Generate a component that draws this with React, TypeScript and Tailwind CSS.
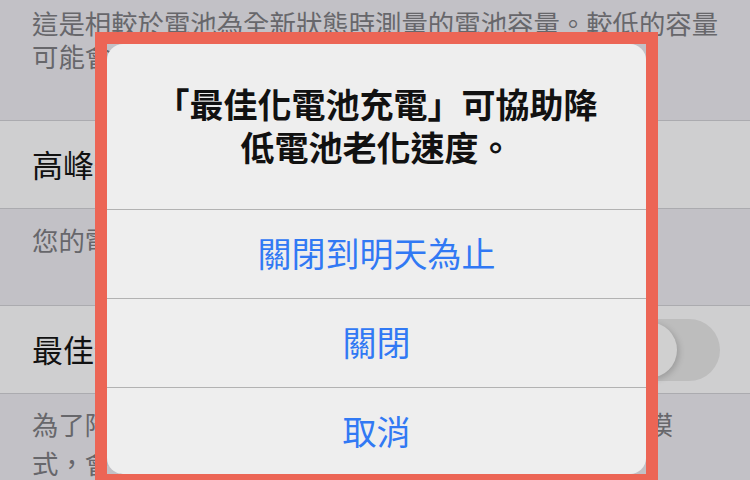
const font = { fontFamily: '"Noto Sans CJK TC", "Noto Sans", sans-serif' };

function Footer({ lines, className }: { lines: string[]; className: string }) {
  return (
    <div className={`px-[32px] text-[26.4px] text-[#67676b] ${className}`}>
      {lines.map((line) => (
        <div key={line} className="whitespace-nowrap">
          {line}
        </div>
      ))}
    </div>
  );
}

function Row({ label, toggle }: { label: string; toggle?: boolean }) {
  return (
    <div className="flex h-[89px] items-center justify-between border-y border-[#ababaf] bg-[#cfcfd0] pl-[32px] pr-[30px]">
      <span className="text-[31px] text-[#111111]">{label}</span>
      {toggle ? (
        <div className="flex h-[62px] w-[102px] items-center rounded-full bg-[#bdbdbd] px-[3px]">
          <div className="h-[56px] w-[56px] rounded-full bg-[#d0d0d0] shadow-[2px_2px_6px_rgba(0,0,0,0.18)]" />
        </div>
      ) : null}
    </div>
  );
}

function Alert() {
  return (
    <div className="absolute left-[95px] top-[32px] h-[454px] w-[563px] border-[12px] border-[#ec6555]">
      <div className="flex h-[430px] flex-col overflow-hidden rounded-[16px] bg-[#eeeeee]">
        <div className="px-[30px] pb-[41px] pt-[38px] text-center text-[34px] font-semibold leading-[43px] text-[#111111]">
          「最佳化電池充電」可協助降
          <br />
          低電池老化速度。
        </div>
        <button
          type="button"
          className="h-[89px] border-t border-[#b2b2b2] pb-[4px] text-[34px] text-[#3179f4]"
        >
          關閉到明天為止
        </button>
        <button
          type="button"
          className="h-[89px] border-t border-[#b2b2b2] pb-[4px] text-[34px] text-[#3179f4]"
        >
          關閉
        </button>
        <button
          type="button"
          className="flex-1 border-t border-[#b2b2b2] pb-[2px] text-[34px] text-[#3179f4]"
        >
          取消
        </button>
      </div>
    </div>
  );
}

export default function App() {
  return (
    <div className="relative h-[480px] w-[750px] overflow-hidden bg-[#c2c1c6]" style={font}>
      <Footer
        className="h-[120px] pt-[6px] leading-[33px]"
        lines={['這是相較於電池為全新狀態時測量的電池容量。較低的容量', '可能會使可用電池使用時間變短。']}
      />
      <Row label="高峰效能容量" />
      <Footer className="h-[96px] pt-[14px] leading-[33px]" lines={['您的電池目前支援正常的高峰效能。']} />
      <Row label="最佳化電池充電" toggle />
      <Footer
        className="pt-[10px] leading-[39px]"
        lines={['為了降低電池老化速度，iPhone會學習您的每日充電模', '式，會等到您需要使用時才充電超過80%。']}
      />
      <Alert />
    </div>
  );
}
